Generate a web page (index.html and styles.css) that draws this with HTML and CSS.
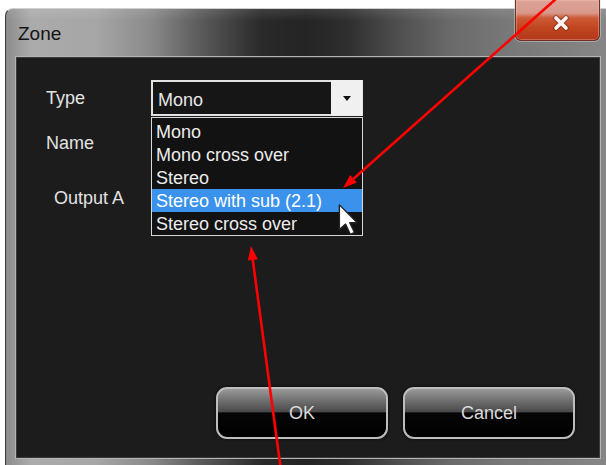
FILE: index.html
```html
<!DOCTYPE html>
<html lang="en">
<head>
<meta charset="utf-8">
<title>Zone</title>
<link rel="stylesheet" href="styles.css">
</head>
<body>
<div class="window">
  <div class="titlebar">
    <span class="title">Zone</span>
    <button class="close" aria-label="Close">
      <svg width="22" height="20" viewBox="0 0 22 20">
        <path d="M6 5 L16 15 M16 5 L6 15" stroke="#5a2418" stroke-width="6" stroke-linecap="round" opacity="0.4"/>
        <path d="M6 5 L16 15 M16 5 L6 15" stroke="#fbf4f2" stroke-width="3.6" stroke-linecap="round"/>
      </svg>
    </button>
  </div>
  <div class="client">
    <div class="form">
      <div class="row row-type">
        <span class="label">Type</span>
        <div class="combo">
          <div class="combo-value">Mono</div>
          <div class="combo-btn"><span class="caret"></span></div>
          <ul class="dropdown">
            <li>Mono</li>
            <li>Mono cross over</li>
            <li>Stereo</li>
            <li class="selected">Stereo with sub (2.1)</li>
            <li>Stereo cross over</li>
          </ul>
        </div>
      </div>
      <div class="row row-name">
        <span class="label">Name</span>
      </div>
      <div class="row row-output">
        <span class="label">Output A</span>
      </div>
    </div>
    <div class="actions">
      <button class="btn">OK</button>
      <button class="btn">Cancel</button>
    </div>
  </div>
</div>

<svg class="cursor" width="22" height="34" viewBox="0 0 16 24">
  <path d="M1 1 L1 19 L5.5 15 L9 22.5 L12 21 L8.5 14 L14 14 Z" fill="#ffffff" stroke="#222222" stroke-width="1" stroke-linejoin="round"/>
</svg>

<svg class="notes" width="606" height="465" viewBox="0 0 606 465">
  <line x1="557" y1="-2" x2="353.5" y2="178.7" stroke="#ff0000" stroke-width="2.6"/>
  <polygon points="343,188 356.8,182.5 350.2,175" fill="#ff0000"/>
  <line x1="280.5" y1="467" x2="252.8" y2="259.9" stroke="#ff0000" stroke-width="2.6"/>
  <polygon points="251,246 257.8,259.2 247.9,260.6" fill="#ff0000"/>
</svg>
</body>
</html>
```

FILE: styles.css
```css
html, body {
  margin: 0;
  padding: 0;
  background: #ffffff;
  overflow: hidden;
  width: 606px;
  height: 465px;
  position: relative;
  font-family: "Liberation Sans", Arial, sans-serif;
}

.window {
  margin: 8px 0 0 5px;
  width: 610px;
  height: 470px;
  border-radius: 8px 8px 0 0;
  box-sizing: border-box;
  padding-left: 9px;
  display: flex;
  flex-direction: column;
  position: relative;
  background:
    linear-gradient(180deg, rgba(255,255,255,0.10) 0px, rgba(255,255,255,0) 12px),
    linear-gradient(90deg, #8c8c8c 0px, #ababab 25px, #a6a6a6 90px, #8a8a8a 145px, #5a5a5a 195px, #2a2a2a 255px, #242424 300px, #2e2e2e 340px, #505050 395px, #6a6a6a 445px, #787878 500px, #868686 600px);
  border-top: 1px solid #cfcfcf;
  border-left: 1px solid #3a3a3a;
}

.titlebar {
  height: 47px;
  display: flex;
  align-items: center;
  margin-left: -9px;
  padding-left: 12px;
}

.title {
  font-size: 19px;
  color: #141414;
  padding-top: 3px;
}

.close {
  position: absolute;
  left: 509px;
  top: -9px;
  width: 85px;
  height: 41px;
  box-sizing: border-box;
  border: 1px solid #6b3028;
  border-top: none;
  border-radius: 0 0 6px 6px;
  background: linear-gradient(180deg, #dca49a 0px, #d8988a 13px, #cc5a36 18px, #c0451f 28px, #b2381a 40px);
  box-shadow: 0 0 0 1px rgba(220,220,220,0.45), inset 0 0 0 1px rgba(255,200,180,0.35);
  display: flex;
  align-items: center;
  justify-content: center;
  padding: 6px 0 0 6px;
}

.client {
  width: 586px;
  height: 403px;
  box-sizing: border-box;
  border: 1px solid #b4b4b4;
  box-shadow: inset 0 0 0 1px #3a3a3a;
  background: #1c1c1c;
  padding: 23px 25px 19px 30px;
  display: flex;
  flex-direction: column;
}

.form {
  flex: 1;
  display: flex;
  flex-direction: column;
}

.row {
  display: flex;
  align-items: center;
}

.label {
  font-size: 18px;
  color: #e2e2e2;
  width: 105px;
}

.row-type {
  height: 36px;
}

.row-name {
  height: 34px;
  margin-top: 10px;
}

.row-output {
  height: 34px;
  margin-top: 21px;
  padding-left: 8px;
}

.combo {
  position: relative;
  width: 212px;
  height: 36px;
  box-sizing: border-box;
  border: 2px solid #e2e2e2;
  border-right-width: 1px;
  display: flex;
  background: #161616;
}

.combo-value {
  flex: 1;
  font-size: 18px;
  color: #e6e6e6;
  display: flex;
  align-items: center;
  padding-left: 5px;
  padding-top: 4px;
}

.combo-btn {
  width: 31px;
  background: #f0f0f0;
  display: flex;
  align-items: center;
  justify-content: center;
  margin: -2px 0;
}

.caret {
  width: 0;
  height: 0;
  border-left: 4px solid transparent;
  border-right: 4px solid transparent;
  border-top: 5px solid #111111;
  margin-top: 1px;
}

.dropdown {
  position: absolute;
  left: -2px;
  top: 35px;
  width: 212px;
  margin: 0;
  padding: 2px 0 0;
  list-style: none;
  box-sizing: border-box;
  border: 1px solid #d8d8d8;
  background: #121212;
  z-index: 2;
}

.dropdown li {
  height: 23px;
  line-height: 25px;
  font-size: 18px;
  color: #ececec;
  padding-left: 4px;
  white-space: nowrap;
}

.dropdown li.selected {
  background: #3a92ec;
  color: #ffffff;
}

.actions {
  display: flex;
  justify-content: flex-end;
  gap: 15px;
}

.btn {
  width: 172px;
  height: 52px;
  box-sizing: border-box;
  border: 2px solid #bdbdbd;
  border-radius: 11px;
  background: linear-gradient(180deg, #9a9a9a 0%, #6e6e6e 25%, #4a4a4a 47%, #050505 50%, #000000 100%);
  color: #dadada;
  font-family: "Liberation Sans", Arial, sans-serif;
  font-size: 18px;
  padding: 0;
  box-shadow: 0 0 3px rgba(0,0,0,0.8);
}

.cursor {
  position: absolute;
  left: 338px;
  top: 203px;
  z-index: 5;
}

.notes {
  position: absolute;
  left: 0;
  top: 0;
  z-index: 10;
  pointer-events: none;
}
```
